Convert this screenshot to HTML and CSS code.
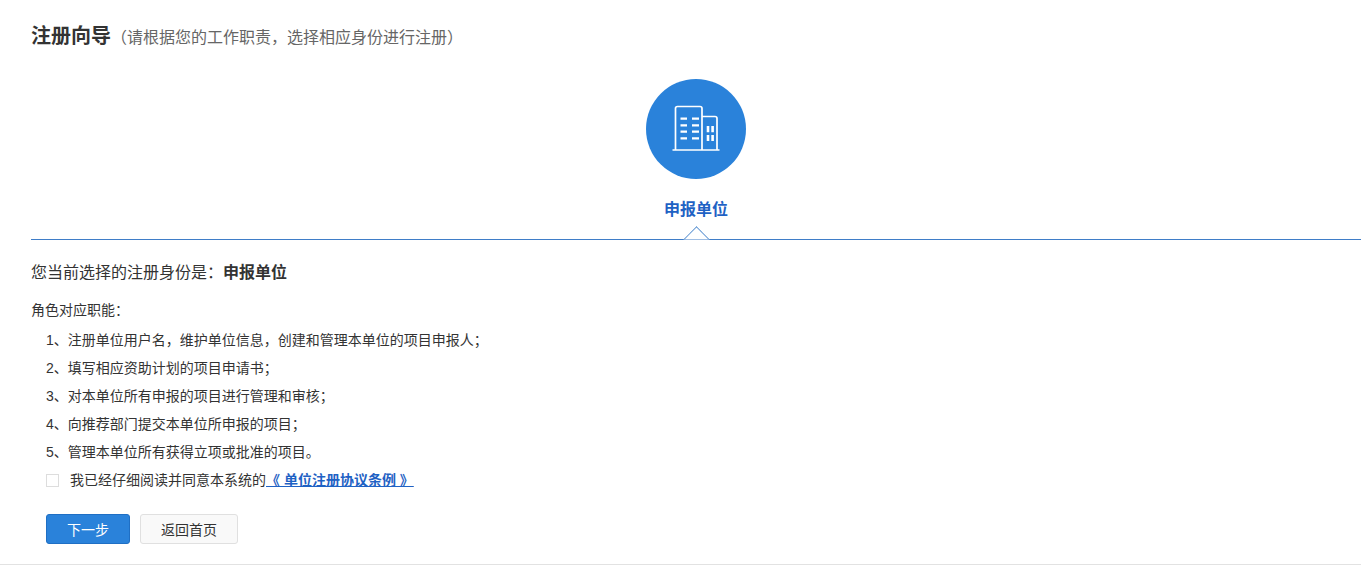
FILE: index.html
```html
<!DOCTYPE html>
<html lang="zh-CN">
<head>
  <meta charset="utf-8">
  <title>注册向导</title>
  <link rel="stylesheet" href="styles.css">
</head>
<body>
  <div class="wizard">
    <h1 class="wizard-title">注册向导<span class="wizard-tip">（请根据您的工作职责，选择相应身份进行注册）</span></h1>

    <div class="role">
      <div class="role-icon">
        <svg width="48" height="48" viewBox="0 0 48 48" fill="none" stroke="#fff" stroke-width="1.7">
          <path d="M3.5 45V3.5a2 2 0 0 1 2-2H28a2 2 0 0 1 2 2V45"/>
          <path d="M30 11.5h13a2 2 0 0 1 2 2V45"/>
          <path d="M0.5 45h47"/>
          <path d="M8.5 13.7h6.5M20 13.7h7M8.5 20.3h6.5M20 20.3h7M8.5 26.7h6.5M20 26.7h7M8.5 33.3h6.5M20 33.3h7" stroke-width="2.2"/>
          <path d="M36 21v6.3M40.6 21v6.3M36 30v6M40.6 30v6" stroke-width="2.6"/>
        </svg>
      </div>
      <div class="role-name">申报单位</div>
      <div class="role-line"><i class="role-arrow"></i></div>
    </div>

    <p class="current">您当前选择的注册身份是：<b>申报单位</b></p>

    <p class="duty-title">角色对应职能：</p>
    <ul class="duty-list">
      <li>1、注册单位用户名，维护单位信息，创建和管理本单位的项目申报人；</li>
      <li>2、填写相应资助计划的项目申请书；</li>
      <li>3、对本单位所有申报的项目进行管理和审核；</li>
      <li>4、向推荐部门提交本单位所申报的项目；</li>
      <li>5、管理本单位所有获得立项或批准的项目。</li>
    </ul>

    <label class="agree">
      <span class="check"></span>
      <span class="agree-text">我已经仔细阅读并同意本系统的<a href="#" class="agree-link">《 单位注册协议条例 》</a></span>
    </label>

    <div class="actions">
      <button class="btn btn-primary">下一步</button>
      <button class="btn">返回首页</button>
    </div>
  </div>
</body>
</html>
```

FILE: styles.css
```css
html, body {
  margin: 0;
  height: 100%;
}
body {
  background-color: #fff;
  color: #333;
  font-family: "Liberation Sans", "Noto Sans CJK SC", sans-serif;
  font-size: 14px;
  overflow: hidden;
}
.wizard {
  height: 565px;
  box-sizing: border-box;
  padding: 21px 0 0 31px;
  border-bottom: 1px solid #e2e2e2;
}
.wizard-title {
  margin: 0;
  height: 30px;
  line-height: 30px;
  font-size: 20px;
  font-weight: bold;
}
.wizard-tip {
  font-size: 16px;
  font-weight: normal;
  color: #666;
}
.role {
  display: flex;
  flex-direction: column;
  align-items: center;
  margin-top: 28px;
}
.role-icon {
  display: flex;
  align-items: center;
  justify-content: center;
  width: 100px;
  height: 100px;
  border-radius: 50%;
  background-color: #2a82da;
}
.role-name {
  margin-top: 19px;
  height: 24px;
  line-height: 24px;
  font-size: 16px;
  font-weight: bold;
  color: #1f62c4;
}
.role-line {
  position: relative;
  align-self: stretch;
  margin-top: 17px;
  height: 1px;
  background-color: #3f7dc8;
}
.role-arrow {
  position: absolute;
  left: 50%;
  top: -9px;
  width: 19px;
  height: 19px;
  margin-left: -9.5px;
  box-sizing: border-box;
  border-top: 1px solid #4a86cc;
  border-left: 1px solid #4a86cc;
  background-color: #fff;
  transform: rotate(45deg);
  clip-path: polygon(0 0, 100% 0, 0 100%);
}
.current {
  margin: 21px 0 0;
  height: 24px;
  line-height: 24px;
  font-size: 16px;
}
.duty-title {
  margin: 11px 0 2px;
  height: 28px;
  line-height: 28px;
  font-size: 14px;
}
.duty-list {
  margin: 0;
  padding: 0 0 0 15px;
  list-style: none;
}
.duty-list li {
  height: 28px;
  line-height: 28px;
}
.agree {
  display: flex;
  align-items: center;
  height: 28px;
  margin-left: 15px;
}
.check {
  width: 13px;
  height: 13px;
  box-sizing: border-box;
  margin-right: 11px;
  border: 1px solid #ddd;
  background-color: #fff;
}
.agree-text {
  padding-bottom: 2px;
}
.agree-link {
  color: #1f62c4;
  font-weight: bold;
}
.actions {
  display: flex;
  gap: 10px;
  margin: 20px 0 0 15px;
}
.btn {
  width: 98px;
  height: 30px;
  padding: 0;
  box-sizing: border-box;
  border: 1px solid #e0e0e0;
  border-radius: 3px;
  background-color: #f9f9f9;
  color: #333;
  font-family: inherit;
  font-size: 14px;
}
.btn-primary {
  width: 84px;
  border-color: #1f6fc4;
  background-color: #2a82da;
  color: #fff;
}
```
